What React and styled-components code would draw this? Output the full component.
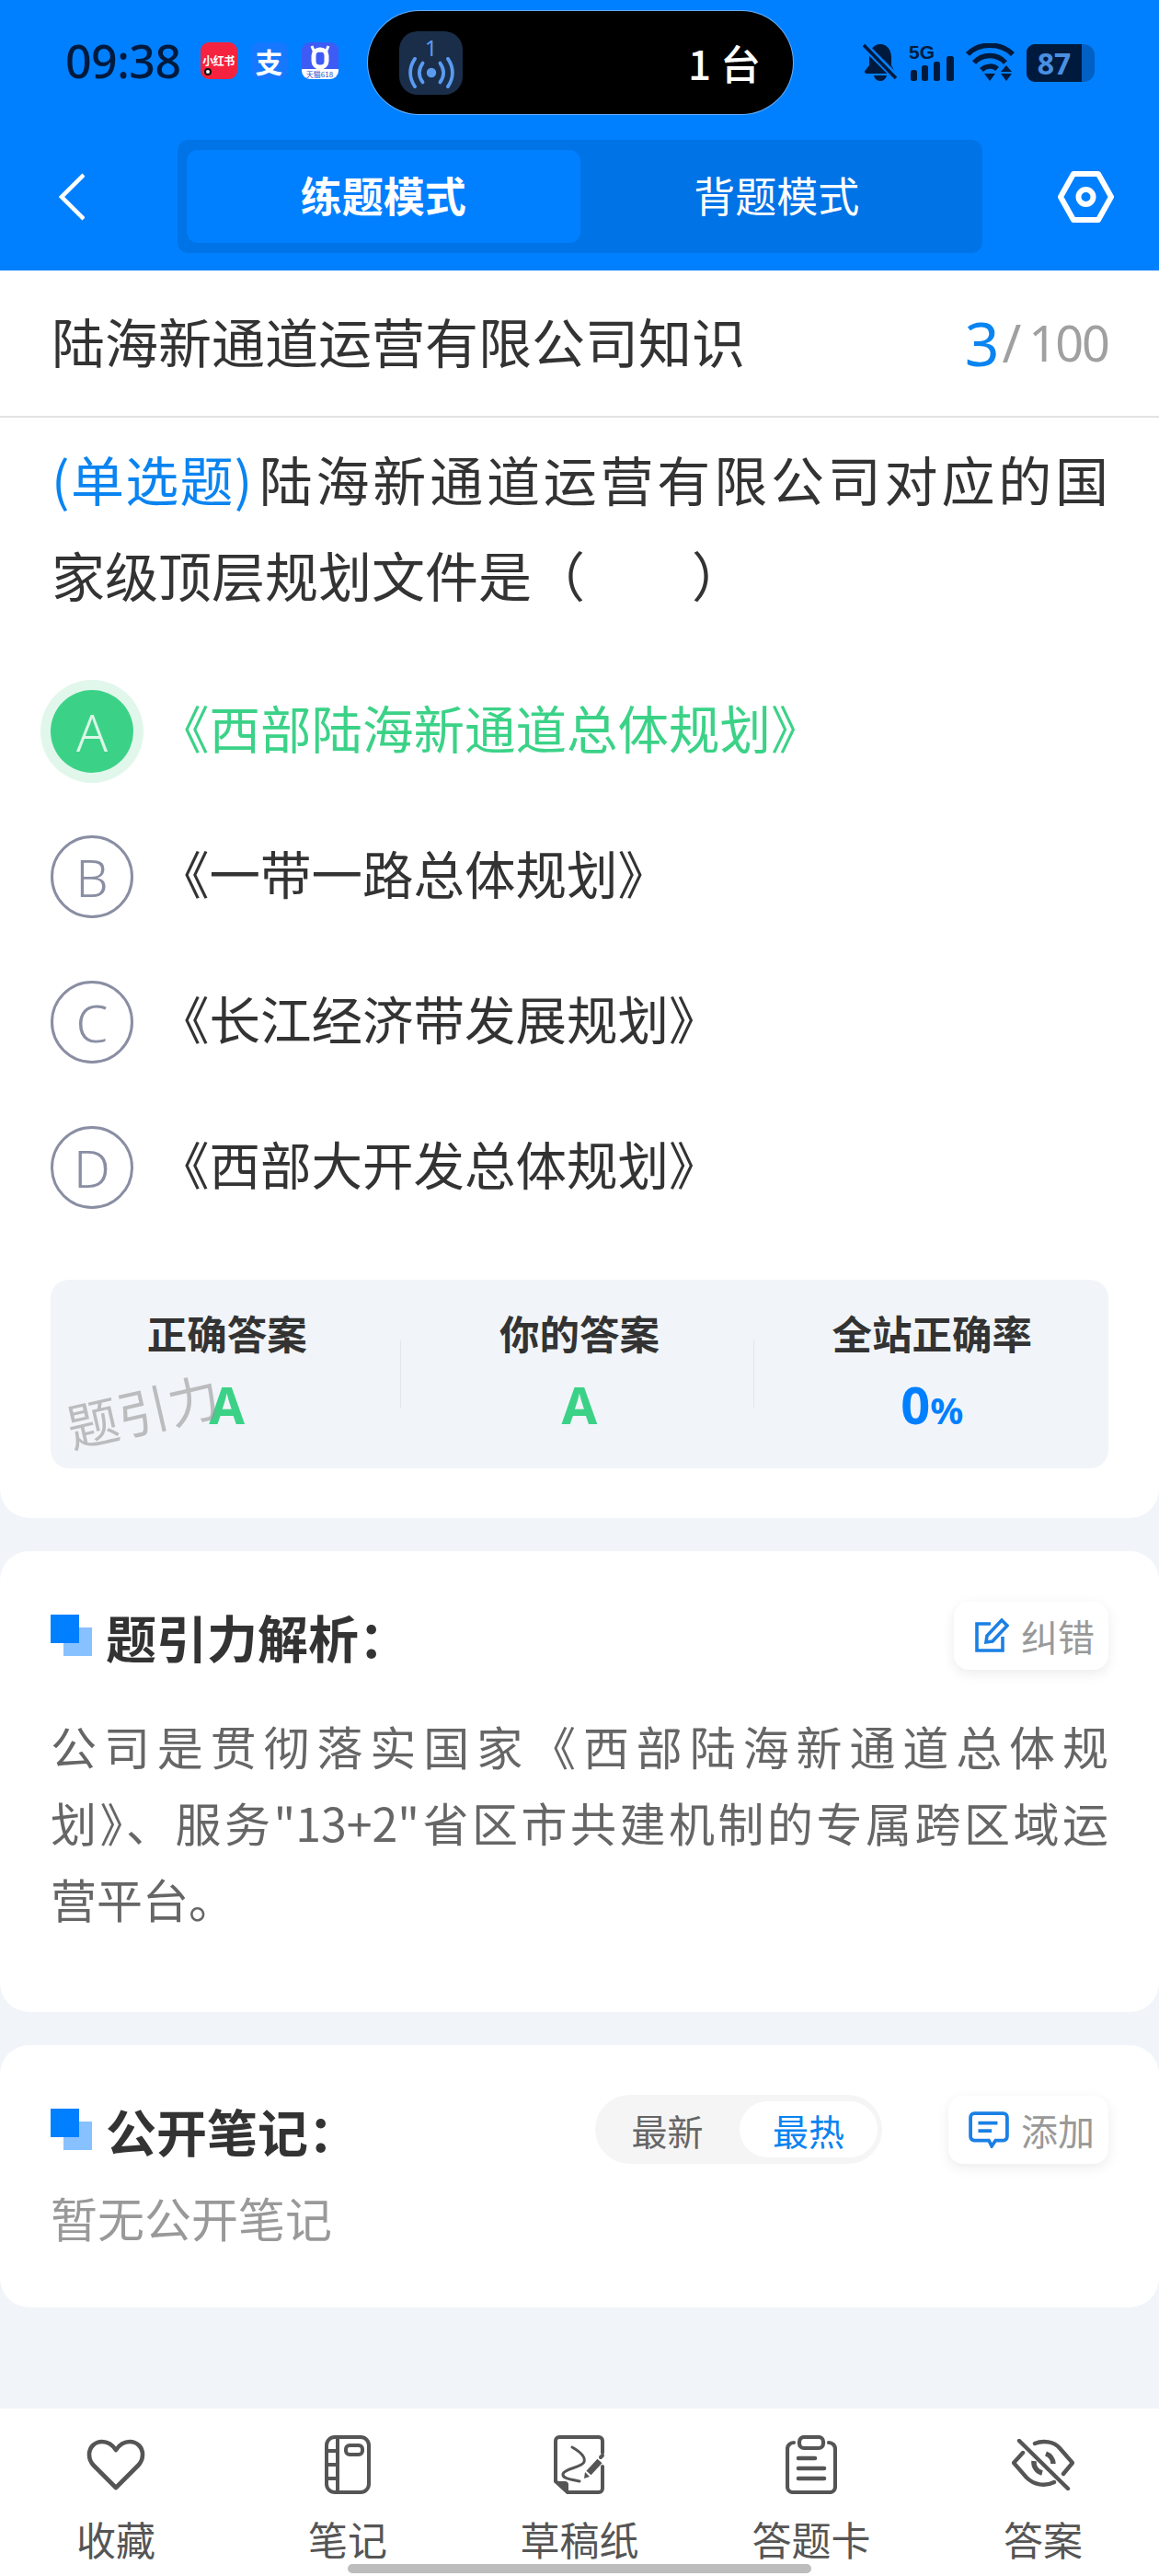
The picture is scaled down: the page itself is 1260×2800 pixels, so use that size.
import React from "react";
import styled, { createGlobalStyle } from "styled-components";

const options = [
  { key: "A", text: "《西部陆海新通道总体规划》", correct: true },
  { key: "B", text: "《一带一路总体规划》" },
  { key: "C", text: "《长江经济带发展规划》" },
  { key: "D", text: "《西部大开发总体规划》" },
];

const stats = [
  { label: "正确答案", value: "A", tone: "#3bd287" },
  { label: "你的答案", value: "A", tone: "#3bd287" },
  { label: "全站正确率", value: "0", unit: "%", tone: "#0080ff" },
];

export default function App() {
  return (
    <>
      <GlobalStyle />
      <Page>
        <Header>
          <StatusBar>
            <StatusLeft>
              <Clock>09:38</Clock>
              <AppIcons>
                <RedNoteIcon>
                  小红书
                  <RedDot />
                </RedNoteIcon>
                <AlipayIcon>支</AlipayIcon>
                <TmallIcon>
                  <BullIcon />
                  <TmallStrip>天猫618</TmallStrip>
                </TmallIcon>
              </AppIcons>
            </StatusLeft>
            <Island>
              <IslandBadge>
                <IslandCount>1</IslandCount>
                <BroadcastIcon />
              </IslandBadge>
              <IslandText>1 台</IslandText>
            </Island>
            <StatusRight>
              <BellOffIcon />
              <SignalIcon />
              <WifiIcon />
              <Battery>
                <BatteryFill>87</BatteryFill>
              </Battery>
            </StatusRight>
          </StatusBar>
          <NavBar>
            <BackIcon />
            <ModeTabs>
              <ModeTab $active>练题模式</ModeTab>
              <ModeTab>背题模式</ModeTab>
            </ModeTabs>
            <HexIcon />
          </NavBar>
        </Header>

        <Content>
          <QuestionCard>
            <TitleRow>
              <PaperTitle>陆海新通道运营有限公司知识</PaperTitle>
              <Progress>
                <ProgressNow>3</ProgressNow>
                <ProgressSlash>/</ProgressSlash>
                <ProgressTotal>100</ProgressTotal>
              </Progress>
            </TitleRow>
            <Question>
              <QuestionLine $justify>
                <QuestionType>(单选题)</QuestionType>陆海新通道运营有限公司对应的国
              </QuestionLine>
              <QuestionLine>家级顶层规划文件是（　　）</QuestionLine>
            </Question>
            <OptionList>
              {options.map((o) => (
                <OptionRow key={o.key}>
                  <OptionBadge $correct={o.correct}>{o.key}</OptionBadge>
                  <OptionText $correct={o.correct}>{o.text}</OptionText>
                </OptionRow>
              ))}
            </OptionList>
            <AnswerBox>
              {stats.map((s, i) => (
                <AnswerCol key={s.label} $divided={i > 0}>
                  <AnswerLabel>{s.label}</AnswerLabel>
                  <AnswerValue $tone={s.tone}>
                    {s.value}
                    {s.unit && <AnswerUnit>{s.unit}</AnswerUnit>}
                  </AnswerValue>
                </AnswerCol>
              ))}
              <Watermark>题引力</Watermark>
            </AnswerBox>
          </QuestionCard>

          <AnalysisCard>
            <CardHead>
              <SectionTitle>
                <SectionMark />
                题引力解析：
              </SectionTitle>
              <SoftButton>
                <EditIcon />
                纠错
              </SoftButton>
            </CardHead>
            <AnalysisBody>
              <AnalysisLine $justify>公司是贯彻落实国家《西部陆海新通道总体规</AnalysisLine>
              <AnalysisLine $justify>划》、服务"13+2"省区市共建机制的专属跨区域运</AnalysisLine>
              <AnalysisLine>营平台。</AnalysisLine>
            </AnalysisBody>
          </AnalysisCard>

          <NotesCard>
            <CardHead>
              <SectionTitle>
                <SectionMark />
                公开笔记：
              </SectionTitle>
              <NoteActions>
                <SortToggle>
                  <SortOption>最新</SortOption>
                  <SortOption $active>最热</SortOption>
                </SortToggle>
                <SoftButton>
                  <CommentIcon />
                  添加
                </SoftButton>
              </NoteActions>
            </CardHead>
            <EmptyNotes>暂无公开笔记</EmptyNotes>
          </NotesCard>
        </Content>

        <BottomBar>
          <BottomItem>
            <IconSlot>
              <HeartIcon />
            </IconSlot>
            收藏
          </BottomItem>
          <BottomItem>
            <IconSlot>
              <NotebookIcon />
            </IconSlot>
            笔记
          </BottomItem>
          <BottomItem>
            <IconSlot>
              <ScratchIcon />
            </IconSlot>
            草稿纸
          </BottomItem>
          <BottomItem>
            <IconSlot>
              <ClipboardIcon />
            </IconSlot>
            答题卡
          </BottomItem>
          <BottomItem>
            <IconSlot>
              <EyeOffIcon />
            </IconSlot>
            答案
          </BottomItem>
          <HomeBar />
        </BottomBar>
      </Page>
    </>
  );
}

/* drawings */

function BullIcon() {
  return (
    <svg width="28" height="27" viewBox="0 0 28 27" fill="none">
      <path d="M5 2 L7 7 H21 L23 2" stroke="#fff" strokeWidth="3" />
      <rect x="7" y="6" width="14" height="19" rx="6.5" stroke="#fff" strokeWidth="5" />
    </svg>
  );
}

function BroadcastIcon() {
  return (
    <svg width="54" height="34" viewBox="0 0 54 36" fill="none" stroke="#5a9bf0" strokeWidth="4" strokeLinecap="round">
      <circle cx="27" cy="18" r="5.5" fill="#5a9bf0" stroke="none" />
      <path d="M17 7 C12 14 12 22 17 29" />
      <path d="M37 7 C42 14 42 22 37 29" />
      <path d="M8 2 C1 12 1 24 8 34" />
      <path d="M46 2 C53 12 53 24 46 34" />
    </svg>
  );
}

function BellOffIcon() {
  return (
    <svg width="38" height="42" viewBox="0 0 38 42">
      <path d="M19 1 C27 1 31 8 31 16 V24 L36 33 H5 C2 33 1 31 3 29 L7 24 V16 C7 8 11 1 19 1Z" fill="#001a3d" />
      <path d="M12 35 H26 C25 39 22 41 19 41 C16 41 13 39 12 35Z" fill="#001a3d" />
      <path d="M0 1 L37 38" stroke="#0080ff" strokeWidth="8" />
      <path d="M1 2 L36 38" stroke="#001a3d" strokeWidth="3.5" />
    </svg>
  );
}

function SignalIcon() {
  return (
    <svg width="50" height="42" viewBox="0 0 50 42" fill="#001a3d">
      <text x="0" y="17" fontSize="20" fontWeight="700" fontFamily="Liberation Sans, sans-serif" textLength="28" lengthAdjust="spacingAndGlyphs">5G</text>
      <rect x="2" y="29" width="7" height="12" rx="2.5" />
      <rect x="14" y="24" width="7" height="17" rx="2.5" />
      <rect x="27" y="20" width="7" height="21" rx="2.5" />
      <rect x="41" y="14" width="8" height="27" rx="2.5" />
    </svg>
  );
}

function WifiIcon() {
  return (
    <svg width="54" height="42" viewBox="0 0 54 42" fill="none" stroke="#001a3d" strokeWidth="5.5">
      <path d="M2 12 C14 -1 38 -1 51 12" />
      <path d="M9 21 C18 11 34 11 43 21" />
      <path d="M17 29 C22 24 30 24 34 28" />
      <path d="M20 33 H32 L26 41Z" fill="#001a3d" stroke="none" />
      <path d="M44 24 L50 31 H38Z M38 33 H50 L44 41Z" fill="#001a3d" stroke="none" />
    </svg>
  );
}

function BackIcon() {
  return (
    <svg width="28" height="52" viewBox="0 0 28 52" fill="none" stroke="#fff" strokeWidth="4.5">
      <path d="M27 2 L3 26 L27 50" />
    </svg>
  );
}

function HexIcon() {
  return (
    <svg width="61" height="56" viewBox="0 0 61 56" fill="none" stroke="#fff" strokeWidth="6" strokeLinejoin="round">
      <path d="M17 3 H44 L58 28 L44 53 H17 L3 28Z" />
      <circle cx="30.5" cy="28" r="8" />
    </svg>
  );
}

function SectionMark() {
  return (
    <SectionMarkSvg width="45" height="45" viewBox="0 0 45 45">
      <rect x="14" y="14" width="31" height="31" fill="#88c1ff" />
      <rect width="31" height="31" fill="#0080ff" />
    </SectionMarkSvg>
  );
}

function EditIcon() {
  return (
    <svg width="38" height="38" viewBox="0 0 38 38" fill="none" stroke="#1a80e5" strokeWidth="3.6">
      <path d="M18 6 H3 V35 H31 V20" />
      <path d="M30 2 L36 8 L20 25 L13 26 L14 19Z" />
    </svg>
  );
}

function CommentIcon() {
  return (
    <svg width="44" height="40" viewBox="0 0 42 38" fill="none" stroke="#1a80e5" strokeWidth="3.6">
      <path d="M6 2 H36 A4 4 0 0 1 40 6 V26 A4 4 0 0 1 36 30 H28 L24 36 L21 30 H6 A4 4 0 0 1 2 26 V6 A4 4 0 0 1 6 2Z" />
      <path d="M10 12 H30 M10 20 H24" />
    </svg>
  );
}

function HeartIcon() {
  return (
    <svg width="64" height="56" viewBox="0 0 64 56" fill="none" stroke="#555" strokeWidth="4.6" strokeLinejoin="round">
      <path d="M32 12 C28 6 23 3 17 3 C9 3 3 9 3 17 C3 22 5 26 8 29 L32 53 L56 29 C59 26 61 22 61 17 C61 9 55 3 47 3 C41 3 36 6 32 12Z" />
    </svg>
  );
}

function NotebookIcon() {
  return (
    <svg width="50" height="64" viewBox="0 0 50 64" fill="none" stroke="#555" strokeWidth="4">
      <rect x="2" y="2" width="46" height="60" rx="9" />
      <path d="M14 2 V62 M2 17 H14 M2 32 H14 M2 47 H14" />
      <rect x="23" y="11" width="18" height="10" rx="4" />
    </svg>
  );
}

function ScratchIcon() {
  return (
    <svg width="56" height="64" viewBox="0 0 56 64" fill="none" stroke="#555" strokeWidth="4" strokeLinecap="round">
      <path d="M53 19 V6 A4 4 0 0 0 49 2 H6 A4 4 0 0 0 2 6 V50 L15 62 H49 A4 4 0 0 0 53 58 V34" />
      <path d="M2 50 H12 A4 4 0 0 1 16 54 V62Z" fill="#555" stroke="none" />
      <path d="M20 13 C27 17 35 23 33 29 C31 35 12 36 10 42 C9 47 18 48 28 50" strokeWidth="3" />
      <path d="M38 41 L50 28" strokeWidth="7" strokeLinecap="butt" />
      <path d="M33 47 L34 40 L39 45Z" fill="#555" stroke="none" />
      <path d="M51 24 L53 22" strokeWidth="4" />
    </svg>
  );
}

function ClipboardIcon() {
  return (
    <svg width="56" height="64" viewBox="0 0 56 64" fill="none" stroke="#555" strokeWidth="4.2" strokeLinecap="round">
      <path d="M9 8 A7 7 0 0 0 2 15 V56 A6 6 0 0 0 8 62 H48 A6 6 0 0 0 54 56 V15 A7 7 0 0 0 47 8" />
      <rect x="15" y="2" width="26" height="12" rx="5" />
      <path d="M14 25 H32 M14 36 H42 M14 47 H42" strokeWidth="4.6" />
    </svg>
  );
}

function EyeOffIcon() {
  return (
    <svg width="68" height="56" viewBox="0 0 68 56" fill="none" stroke="#555" strokeWidth="4.4" strokeLinecap="round">
      <path d="M8 2 L61 54" />
      <path d="M25 5 C34 1 46 3 52 10 L66 26 L56 38" />
      <path d="M12 15 L2 26 L16 42 C24 50 36 52 46 47" />
      <path d="M37 16 A12 12 0 0 1 45 27" strokeWidth="5.5" strokeLinecap="butt" />
      <path d="M24 24 A12 12 0 0 0 33 37" strokeWidth="5.5" strokeLinecap="butt" />
    </svg>
  );
}

/* page */

const GlobalStyle = createGlobalStyle`
  html, body {
    margin: 0;
    padding: 0;
    background: #f1f5f9;
    font-family: "Noto Sans CJK SC", "Noto Sans", sans-serif;
  }
`;

const Page = styled.div`
  width: 1260px;
  height: 2800px;
  display: flex;
  flex-direction: column;
  overflow: hidden;
  background: #f1f5f9;
`;

const Header = styled.header`
  height: 294px;
  flex: none;
  background: #0080ff;
`;

const StatusBar = styled.div`
  height: 152px;
  box-sizing: border-box;
  padding: 12px 70px 0 71px;
  display: flex;
  align-items: flex-start;
`;

const StatusLeft = styled.div`
  width: 329px;
  flex: none;
  display: flex;
  align-items: center;
  gap: 21px;
  height: 112px;
`;

const Clock = styled.span`
  flex: none;
  font-family: "Noto Sans", sans-serif;
  font-size: 50px;
  font-weight: 500;
  letter-spacing: -0.5px;
  color: #001a3d;
  line-height: 1;
  margin-top: -4px;
`;

const AppIcons = styled.div`
  display: flex;
  gap: 15px;
  margin-top: -4px;
`;

const AppIconBase = styled.div`
  position: relative;
  width: 40px;
  height: 40px;
  border-radius: 9px;
  display: flex;
  align-items: center;
  justify-content: center;
  line-height: 1;
  color: #fff;
`;

const RedNoteIcon = styled(AppIconBase)`
  background: #f5233f;
  font-size: 12px;
  font-weight: 700;
  white-space: nowrap;
  letter-spacing: -0.5px;
`;

const RedDot = styled.i`
  position: absolute;
  left: 4px;
  bottom: 4px;
  width: 8px;
  height: 8px;
  box-sizing: border-box;
  border-radius: 50%;
  background: #fff;
  border: 2px solid #111;
`;

const AlipayIcon = styled(AppIconBase)`
  background: #1677ff;
  font-size: 30px;
  font-weight: 700;
`;

const TmallIcon = styled(AppIconBase)`
  background: #3f5bf5;
  flex-direction: column;
  justify-content: flex-start;
  padding-top: 2px;
  box-sizing: border-box;
  overflow: hidden;
`;

const TmallStrip = styled.span`
  position: absolute;
  left: 0;
  right: 0;
  bottom: 0;
  height: 11px;
  background: #fff;
  color: #2f49c8;
  font-size: 8px;
  line-height: 11px;
  text-align: center;
  white-space: nowrap;
`;

const Island = styled.div`
  width: 462px;
  height: 112px;
  flex: none;
  box-sizing: border-box;
  padding: 0 35px 0 34px;
  border-radius: 56px;
  background: #000;
  box-shadow: 0 0 0 1px rgba(200, 220, 255, 0.5);
  display: flex;
  align-items: center;
  justify-content: space-between;
`;

const IslandBadge = styled.div`
  width: 69px;
  height: 69px;
  border-radius: 20px;
  background: #1a2e4a;
  display: flex;
  flex-direction: column;
  align-items: center;
  justify-content: flex-end;
  padding-bottom: 7px;
  box-sizing: border-box;
`;

const IslandCount = styled.span`
  font-family: "Noto Sans", sans-serif;
  font-size: 24px;
  line-height: 20px;
  color: #5a9bf0;
`;

const IslandText = styled.span`
  font-size: 44px;
  font-weight: 500;
  color: #fff;
`;

const StatusRight = styled.div`
  margin-left: auto;
  display: flex;
  align-items: center;
  gap: 12px;
  padding-top: 35px;
`;

const Battery = styled.div`
  width: 74px;
  height: 41px;
  border-radius: 9px 12px 12px 9px;
  background: #0060c4;
  overflow: hidden;
`;

const BatteryFill = styled.div`
  width: 60px;
  height: 100%;
  background: #001a3d;
  color: #4a90e2;
  font-family: "Noto Sans", sans-serif;
  font-size: 32px;
  font-weight: 700;
  line-height: 41px;
  text-align: center;
`;

const NavBar = styled.nav`
  height: 123px;
  padding: 0 49px 0 64px;
  display: flex;
  align-items: center;
`;

const ModeTabs = styled.div`
  width: 875px;
  height: 123px;
  box-sizing: border-box;
  padding: 11px 10px;
  margin: 0 82px 0 101px;
  border-radius: 12px;
  background: #0073e6;
  display: flex;
`;

const ModeTab = styled.div`
  flex: 1;
  box-sizing: border-box;
  padding-bottom: 5px;
  border-radius: 12px;
  background: ${({ $active }) => ($active ? "#0080ff" : "transparent")};
  color: #fff;
  font-size: 45px;
  font-weight: ${({ $active }) => ($active ? 700 : 400)};
  display: flex;
  align-items: center;
  justify-content: center;
`;

const Content = styled.main`
  flex: 1;
  display: flex;
  flex-direction: column;
  gap: 36px;
`;

const Card = styled.section`
  background: #fff;
  border-radius: 32px;
  box-sizing: border-box;
`;

const QuestionCard = styled(Card)`
  height: 1356px;
  border-radius: 0 0 32px 32px;
  padding-bottom: 55px;
`;

const TitleRow = styled.div`
  height: 160px;
  box-sizing: border-box;
  padding: 0 55px 6px 56px;
  border-bottom: 2px solid #e2e2e2;
  display: flex;
  align-items: center;
  justify-content: space-between;
`;

const PaperTitle = styled.h1`
  margin: 0;
  font-size: 58px;
  font-weight: 400;
  color: #333;
`;

const Progress = styled.div`
  display: flex;
  align-items: center;
  padding-top: 3px;
  font-family: "Noto Sans", sans-serif;
`;

const ProgressNow = styled.span`
  font-size: 66px;
  letter-spacing: -3px;
  color: #0a84f0;
`;

const ProgressSlash = styled.span`
  font-size: 56px;
  color: #a0a0a0;
  margin: 0 8px 0 6px;
`;

const ProgressTotal = styled.span`
  font-size: 54px;
  letter-spacing: -2px;
  color: #a0a0a0;
`;

const Question = styled.div`
  padding: 14px 55px 0 56px;
  font-size: 58px;
  line-height: 104px;
  color: #333;
`;

const QuestionLine = styled.div`
  white-space: nowrap;
  ${({ $justify }) => $justify && "text-align: justify; text-align-last: justify; white-space: normal;"}
`;

const QuestionType = styled.span`
  color: #0a84f0;
  letter-spacing: -2.5px;
  margin-right: 6px;
`;

const OptionList = styled.div`
  margin-top: 40px;
  padding-left: 55px;
`;

const OptionRow = styled.div`
  height: 158px;
  display: flex;
  align-items: center;
  gap: 27px;
`;

const OptionBadge = styled.div`
  width: 90px;
  height: 90px;
  flex: none;
  box-sizing: border-box;
  border-radius: 50%;
  display: flex;
  align-items: center;
  justify-content: center;
  font-family: "Noto Sans", sans-serif;
  font-size: 56px;
  font-weight: 300;
  color: ${({ $correct }) => ($correct ? "#dcf7e8" : "#8a8ea3")};
  background: ${({ $correct }) => ($correct ? "#3bd287" : "#fff")};
  border: ${({ $correct }) => ($correct ? "none" : "3px solid #8a8ea3")};
  box-shadow: ${({ $correct }) => ($correct ? "0 0 0 11px #e2f7ec" : "none")};
`;

const OptionText = styled.div`
  padding-bottom: 10px;
  font-size: 55.5px;
  color: ${({ $correct }) => ($correct ? "#3bd287" : "#333")};
`;

const AnswerBox = styled.div`
  position: relative;
  margin: 43px 55px 0;
  height: 205px;
  border-radius: 20px;
  background: #f1f5f9;
  display: grid;
  grid-template-columns: repeat(3, 1fr);
  overflow: hidden;
`;

const AnswerCol = styled.div`
  position: relative;
  padding-top: 27px;
  text-align: center;

  &::before {
    content: "";
    display: ${({ $divided }) => ($divided ? "block" : "none")};
    position: absolute;
    left: -3px;
    top: 66px;
    height: 73px;
    width: 1px;
    background: #e3e7eb;
  }
`;

const AnswerLabel = styled.div`
  font-size: 43.5px;
  line-height: 62px;
  font-weight: 700;
  color: #333;
`;

const AnswerValue = styled.div`
  margin-top: 8px;
  font-family: "Noto Sans", sans-serif;
  font-size: 56px;
  line-height: 76px;
  font-weight: 700;
  color: ${({ $tone }) => $tone};
`;

const AnswerUnit = styled.span`
  font-size: 40px;
`;

const Watermark = styled.div`
  position: absolute;
  left: 16px;
  top: 106px;
  font-size: 56px;
  line-height: 70px;
  color: rgba(150, 150, 150, 0.6);
  transform: rotate(-13deg);
  pointer-events: none;
`;

const AnalysisCard = styled(Card)`
  height: 501px;
  padding: 54px 55px 0;
`;

const NotesCard = styled(Card)`
  height: 285px;
  padding: 54px 55px 0;
`;

const CardHead = styled.div`
  height: 75px;
  display: flex;
  align-items: center;
  justify-content: space-between;
`;

const SectionTitle = styled.h2`
  margin: 0;
  display: flex;
  align-items: center;
  font-size: 55px;
  font-weight: 700;
  color: #333;
`;

const SectionMarkSvg = styled.svg`
  margin-right: 15px;
  flex: none;
`;

const SoftButton = styled.div`
  height: 74px;
  box-sizing: border-box;
  padding: 0 15px 0 22px;
  border-radius: 16px;
  background: #fff;
  box-shadow: 0 4px 14px rgba(0, 0, 0, 0.08);
  display: flex;
  align-items: center;
  gap: 13px;
  font-size: 40px;
  color: #999;
`;

const AnalysisBody = styled.div`
  margin-top: 41px;
  font-size: 50px;
  line-height: 83px;
  color: #666;
`;

const AnalysisLine = styled.div`
  white-space: nowrap;
  ${({ $justify }) => $justify && "text-align: justify; text-align-last: justify; white-space: normal;"}
`;

const NoteActions = styled.div`
  display: flex;
  align-items: center;
  gap: 72px;
`;

const SortToggle = styled.div`
  width: 312px;
  height: 75px;
  box-sizing: border-box;
  padding: 7px 5px 7px 0;
  border-radius: 38px;
  background: #f5f5f5;
  display: flex;
  justify-content: flex-end;
`;

const SortOption = styled.div`
  width: ${({ $active }) => ($active ? "150px" : "157px")};
  border-radius: 31px;
  background: ${({ $active }) => ($active ? "#fff" : "transparent")};
  color: ${({ $active }) => ($active ? "#0a84f0" : "#666")};
  font-size: 39px;
  display: flex;
  align-items: center;
  justify-content: center;
`;

const EmptyNotes = styled.div`
  margin-top: 25px;
  font-size: 51px;
  line-height: 66px;
  color: #999;
`;

const BottomBar = styled.footer`
  position: relative;
  height: 182px;
  flex: none;
  background: #fff;
  display: grid;
  grid-template-columns: repeat(5, 1fr);
`;

const BottomItem = styled.div`
  display: flex;
  flex-direction: column;
  align-items: center;
  padding-top: 29px;
  font-size: 43px;
  line-height: 50px;
  color: #555;
`;

const IconSlot = styled.div`
  height: 64px;
  margin-bottom: 23px;
  display: flex;
  align-items: center;
  justify-content: center;
`;

const HomeBar = styled.div`
  position: absolute;
  left: 378px;
  bottom: 3px;
  width: 504px;
  height: 10px;
  border-radius: 5px;
  background: #bdbdbd;
`;
